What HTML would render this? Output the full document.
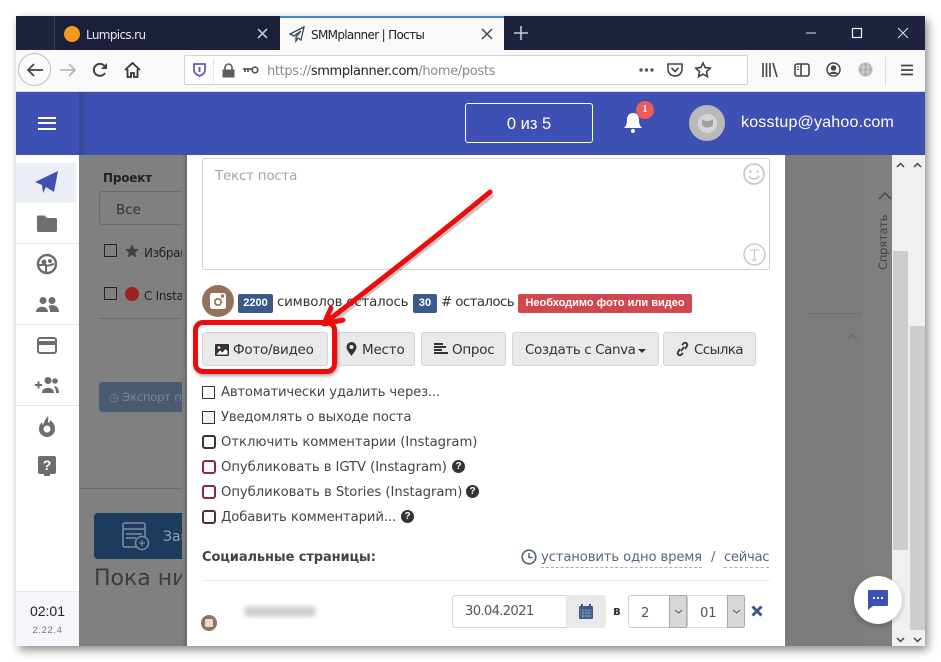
<!DOCTYPE html>
<html lang="ru"><head><meta charset="utf-8"><title>SMMplanner</title>
<style>
html,body{margin:0;padding:0;width:941px;height:662px;overflow:hidden;background:#fff}
body{position:relative;font-family:"DejaVu Sans","Liberation Sans",sans-serif;color:#333}
.a{position:absolute;white-space:nowrap}
.t{position:absolute;white-space:nowrap;line-height:1}
svg{position:absolute;overflow:visible}
.btn{position:absolute;top:332px;height:34px;background:#e9e9e9;border:1px solid #d4d4d4;border-radius:3px;box-sizing:border-box;font-size:14px;line-height:35px;color:#333;white-space:nowrap}
.cb{position:absolute;left:202px;width:13px;height:13px;border:1px solid #333;background:#fff;box-sizing:border-box}
.cbr{border-radius:3px;border-width:2px;width:14px;height:14px;left:202px}
.lab{position:absolute;left:221px;font-size:13.2px;line-height:18px;color:#444;white-space:nowrap}
.q{position:absolute;width:13px;height:13px;border-radius:50%;background:#333;color:#fff;font:bold 10px/13px "Liberation Sans",sans-serif;text-align:center}
.sep{position:absolute;left:16px;width:63px;height:1px;background:#e6e6e6}
</style></head><body>

<!-- window shadow -->
<div class="a" style="left:16px;top:16px;width:909px;height:630px;box-shadow:3px 4px 9px rgba(0,0,0,.45);background:#fff"></div>

<!-- tab bar -->
<div class="a" style="left:16px;top:16px;width:909px;height:34px;background:#1f2340"></div>
<div class="a" style="left:54px;top:17px;width:226px;height:33px;background:#1c1f3a;border-left:1px solid #3d405a"></div>
<div class="a" style="left:64px;top:26px;width:16px;height:16px;border-radius:50%;background:#f39a1c"></div>
<div class="t" style="left:86px;top:29px;font-size:12px;color:#e8e8ef;font-family:'DejaVu Sans',sans-serif;letter-spacing:-.65px">Lumpics.ru</div>
<svg style="left:257px;top:28px" width="11" height="11"><path d="M1 1L10 10M10 1L1 10" stroke="#bfc0c8" stroke-width="1.6"/></svg>
<div class="a" style="left:280px;top:16px;width:224px;height:34px;background:#f9f9fa;border-top:2px solid #3a86d8;box-sizing:border-box"></div>
<svg style="left:289px;top:26px" width="16" height="16" viewBox="0 0 16 16"><path d="M15 1L1 8l4 2 7-5-5 6v4l2-3 3 2z" fill="none" stroke="#33415c" stroke-width="1.3"/></svg>
<div class="t" style="left:311px;top:29px;font-size:12px;color:#222;letter-spacing:-.67px">SMMplanner | Посты</div>
<svg style="left:482px;top:29px" width="10" height="10"><path d="M0 0L10 10M10 0L0 10" stroke="#444" stroke-width="1.5"/></svg>
<svg style="left:514px;top:26px" width="14" height="14"><path d="M7 0V14M0 7H14" stroke="#c9cad2" stroke-width="1.6"/></svg>
<svg style="left:806px;top:26px" width="110" height="14"><path d="M0 7H10" stroke="#ddd" stroke-width="1"/><rect x="46.5" y="2.5" width="9" height="9" fill="none" stroke="#eee" stroke-width="1.2"/><path d="M92 2L102 12M102 2L92 12" stroke="#ddd" stroke-width="1"/></svg>

<!-- toolbar -->
<div class="a" style="left:16px;top:50px;width:909px;height:41px;background:#f9f9fa"></div>
<div class="a" style="left:18px;top:53px;width:33px;height:33px;border-radius:50%;border:1px solid #bdbdbd;box-sizing:border-box;background:#fbfbfb"></div>
<svg style="left:26px;top:62px" width="18" height="16"><path d="M17 8H2M8 2L2 8l6 6" fill="none" stroke="#444" stroke-width="1.7"/></svg>
<svg style="left:60px;top:62px" width="17" height="16"><path d="M0 8H15M9 2l6 6-6 6" fill="none" stroke="#b6b6b8" stroke-width="1.7"/></svg>
<svg style="left:92px;top:62px" width="17" height="16"><path d="M13 11A6 6 0 1 1 12.5 4" fill="none" stroke="#444" stroke-width="2"/><path d="M15 1v6H9z" fill="#444"/></svg>
<svg style="left:124px;top:62px" width="17" height="16"><path d="M1 8L8.500 1 16 8M3.500 7v8h3.500v-4h3v4h3.500V7" fill="none" stroke="#333" stroke-width="1.800"/></svg>
<div class="a" style="left:184px;top:55px;width:564px;height:30px;background:#fff;border:1px solid #d2d2d4;box-sizing:border-box;border-radius:2px"></div>
<svg style="left:192px;top:62px" width="15" height="16"><path d="M2 2h11v6c0 3-3 5-5.500 6C5 13 2 11 2 8z" fill="none" stroke="#5a5cc8" stroke-width="1.800"/><path d="M6.500 5h2v5h-2z" fill="#5a5cc8"/></svg>
<div class="a" style="left:213px;top:58px;width:1px;height:24px;background:#e4e4e4"></div>
<svg style="left:222px;top:63px" width="13" height="15"><path d="M3 7V4.500a3.500 3.500 0 0 1 7 0V7" fill="none" stroke="#5c5c5f" stroke-width="1.600"/><rect x="0.500" y="6.500" width="12" height="8" fill="#5c5c5f"/></svg>
<svg style="left:243px;top:66px" width="16" height="8"><circle cx="12" cy="4" r="2.800" fill="none" stroke="#555" stroke-width="1.700"/><path d="M0 3h9M2 3v3M5 3v3" stroke="#555" stroke-width="1.700" fill="none"/></svg>
<div class="t" style="left:267px;top:65px;font-size:13px;color:#8a8a8f;letter-spacing:-.35px">https://<span style="color:#222">smmplanner.com</span>/home/posts</div>
<svg style="left:638px;top:67px" width="17" height="6"><circle cx="3" cy="3" r="1.700" fill="#555"/><circle cx="8.500" cy="3" r="1.700" fill="#555"/><circle cx="14" cy="3" r="1.700" fill="#555"/></svg>
<svg style="left:667px;top:62px" width="16" height="15"><path d="M1 2h14v5c0 4-3 7-7 7s-7-3-7-7z" fill="none" stroke="#444" stroke-width="1.600"/><path d="M4.500 6L8 9.500 11.500 6" fill="none" stroke="#444" stroke-width="1.600"/></svg>
<svg style="left:695px;top:62px" width="16" height="16"><path d="M8 1l2.200 4.600 5 .6-3.700 3.400 1 5L8 12.200 3.500 14.600l1-5L.8 6.200l5-.6z" fill="none" stroke="#444" stroke-width="1.600"/></svg>
<svg style="left:762px;top:63px" width="16" height="14"><path d="M1 0v14M4.500 0v14M8 0v14M11 0l4 14" stroke="#444" stroke-width="1.600" fill="none"/></svg>
<svg style="left:794px;top:63px" width="16" height="14"><rect x="1" y="1" width="14" height="12" rx="2" fill="none" stroke="#444" stroke-width="1.600"/><path d="M7 1v12" stroke="#444" stroke-width="1.600"/><path d="M3 4h2M3 6.500h2" stroke="#444"/></svg>
<svg style="left:826px;top:62px" width="15" height="15"><circle cx="7.500" cy="7.500" r="6.500" fill="none" stroke="#444" stroke-width="1.500"/><circle cx="7.500" cy="6" r="2.700" fill="#444"/><path d="M3 12c1-3 8-3 9 0z" fill="#444"/></svg>
<svg style="left:858px;top:62px" width="15" height="15"><circle cx="7.500" cy="7.500" r="7" fill="#b0b0b0"/><path d="M0 5h15M0 10h15M5 0v15M10 0v15" stroke="#ddd" stroke-width=".8"/></svg>
<div class="a" style="left:885px;top:56px;width:1px;height:30px;background:#dcdcdc"></div>
<svg style="left:901px;top:64px" width="12" height="12"><path d="M0 1.500H12M0 6H12M0 10.500H12" stroke="#444" stroke-width="1.700"/></svg>

<!-- header -->
<div class="a" style="left:16px;top:91px;width:909px;height:64px;background:#3e50b4;border-top:1px solid #d8daea;box-sizing:border-box"></div>
<div class="a" style="left:79px;top:92px;width:10px;height:63px;background:linear-gradient(90deg,#38478f,#3e50b4)"></div>
<div class="a" style="left:38px;top:117px;width:18px;height:13px;border-top:2px solid #fff;border-bottom:2px solid #fff;box-sizing:border-box"></div>
<div class="a" style="left:38px;top:122px;width:18px;height:2px;background:#fff"></div>
<div class="a" style="left:465px;top:103px;width:128px;height:40px;border:1px solid #fff;border-radius:3px;box-sizing:border-box;color:#fff;text-align:center;font:16.500px/40px 'Liberation Sans',sans-serif">0 из 5</div>
<svg style="left:624px;top:112px" width="18" height="22"><path d="M9 1c-4 0-6 3-6 7 0 4-1 6-3 8h18c-2-2-3-4-3-8 0-4-2-7-6-7z" fill="#fff"/><circle cx="9" cy="19" r="2" fill="#fff"/></svg>
<div class="a" style="left:636px;top:101px;width:18px;height:18px;border-radius:50%;background:#ef5a5a;color:#fff;font:bold 10px/18px 'Liberation Serif',serif;text-align:center">1</div>
<div class="a" style="left:689px;top:105px;width:36px;height:36px;border-radius:50%;background:#b9b9b9"></div>
<div class="a" style="left:698px;top:114px;width:19px;height:19px;border-radius:50%;background:#d5d5d5"></div>
<svg style="left:701px;top:118px" width="13" height="11"><path d="M1 1l3 2h5l3-2v6a6 4 0 0 1-11 0z" fill="#a0a0a0"/></svg>
<div class="t" style="left:741px;top:115px;font:16px/1 'Liberation Sans',sans-serif;color:#fff;letter-spacing:.2px">kosstup@yahoo.com</div>

<!-- sidebar -->
<div class="a" style="left:16px;top:155px;width:63px;height:491px;background:#fff"></div>
<div class="a" style="left:16px;top:163px;width:60px;height:40px;background:#eceef8"></div>
<svg style="left:35px;top:170px" width="24" height="24"><path d="M0 12L23 1l-4 21-8-5-3 6-1-8z" fill="#3e50b4"/></svg>
<svg style="left:37px;top:215px" width="20" height="17"><path d="M0 2a1.500 1.500 0 0 1 1.500-1.500h6L10 3h8.500A1.500 1.500 0 0 1 20 4.500v11a1.500 1.500 0 0 1-1.500 1.500h-17A1.500 1.500 0 0 1 0 15.500z" fill="#6d6d6d"/></svg>
<div class="sep" style="top:243px"></div>
<svg style="left:37px;top:254px" width="20" height="20"><circle cx="10" cy="10" r="9" fill="none" stroke="#6d6d6d" stroke-width="2.500"/><circle cx="7" cy="8" r="2.500" fill="#6d6d6d"/><circle cx="13" cy="7" r="2" fill="#6d6d6d"/><path d="M2 11h7v7M10 12l7-2" stroke="#6d6d6d" stroke-width="2" fill="none"/></svg>
<svg style="left:36px;top:297px" width="23" height="15"><circle cx="7" cy="3.500" r="3.500" fill="#6d6d6d"/><circle cx="16" cy="3.500" r="3.500" fill="#6d6d6d"/><path d="M0 15c0-7 12-7 12 0zM12.500 9c4-2 10-1 10.500 6h-9c0-3-.5-4-1.500-6z" fill="#6d6d6d"/></svg>
<div class="sep" style="top:324px"></div>
<svg style="left:37px;top:337px" width="20" height="17"><rect x="1" y="1" width="18" height="15" rx="2" fill="none" stroke="#6d6d6d" stroke-width="2"/><rect x="1" y="4" width="18" height="4" fill="#6d6d6d"/></svg>
<svg style="left:35px;top:377px" width="24" height="16"><path d="M0 8h7M3.500 4.500v7" stroke="#6d6d6d" stroke-width="2"/><circle cx="13" cy="3.500" r="3.500" fill="#6d6d6d"/><circle cx="20" cy="4" r="2.800" fill="#6d6d6d"/><path d="M7 16c0-7 12-7 12 0zM19 9c3 0 5 3 5 7h-3c0-3-1-5-2-7z" fill="#6d6d6d"/></svg>
<div class="sep" style="top:405px"></div>
<svg style="left:39px;top:416px" width="16" height="21"><path d="M9 0c1 4-1 5 1 7 1-1 1-2 1-3 3 2 5 5 5 9a8 8 0 0 1-16 0c0-3 1-5 3-7 0 1 0 2 1 3 1-4 3-6 5-9z" fill="#6d6d6d"/><circle cx="8" cy="13" r="3.500" fill="#fff"/></svg>
<div class="a" style="left:38px;top:456px;width:18px;height:18px;background:#6d6d6d;border-radius:2px;color:#fff;font:bold 14px/18px 'Liberation Sans',sans-serif;text-align:center">?</div>
<div class="a" style="left:44px;top:473px;width:6px;height:3px;background:#6d6d6d"></div>
<div class="a" style="left:16px;top:591px;width:63px;height:55px;background:#f5f6fb;border-top:1px solid #e8e8e8;box-sizing:border-box"></div>
<div class="t" style="left:16px;width:63px;text-align:center;top:604px;font:14px/1 'Liberation Sans',sans-serif;color:#222">02:01</div>
<div class="t" style="left:16px;width:63px;text-align:center;top:626px;font:9.500px/1 'Liberation Sans',sans-serif;color:#777;letter-spacing:.6px">2.22.4</div>

<!-- dark page left -->
<div class="a" style="left:79px;top:155px;width:108px;height:491px;background:#808080;overflow:hidden">
  <div class="t" style="left:24px;top:17px;font-size:12px;font-weight:bold;color:#222;letter-spacing:-.2px">Проект</div>
  <div class="a" style="left:20px;top:36px;width:120px;height:34px;border:1px solid #6a6a6a;border-radius:3px;box-sizing:border-box"></div>
  <div class="t" style="left:37px;top:49px;font-size:13.500px;color:#333">Все</div>
  <div class="a" style="left:25px;top:89px;width:13px;height:13px;border:1px solid #222;box-sizing:border-box"></div>
  <svg style="left:46px;top:89px" width="14" height="14"><path d="M7 0l2 4.700 5 .5-3.800 3.300 1.200 5L7 11 2.600 13.500l1.200-5L0 5.200l5-.5z" fill="#3c4444"/></svg>
  <div class="t" style="left:65px;top:92px;font-size:12px;color:#222;letter-spacing:-.3px">Избранные</div>
  <div class="a" style="left:25px;top:132px;width:13px;height:13px;border:1px solid #222;box-sizing:border-box"></div>
  <div class="a" style="left:46px;top:132px;width:14px;height:14px;border-radius:50%;background:#a02020"></div>
  <div class="t" style="left:65px;top:135px;font-size:12px;color:#222;letter-spacing:-.3px">С Instagram</div>
  <div class="a" style="left:20px;top:163px;width:100px;height:1px;background:#6e6e6e"></div>
  <div class="a" style="left:20px;top:227px;width:120px;height:30px;background:#4a5a70;border-radius:3px"></div>
  <div class="t" style="left:30px;top:237px;font-size:11.500px;color:#7a8696;letter-spacing:-.2px">◷ Экспорт постов</div>
  <div class="a" style="left:0;top:333px;width:108px;height:1px;background:#6a6a6a"></div>
  <div class="a" style="left:15px;top:358px;width:120px;height:46px;background:#1e3a5c;border-radius:4px"></div>
  <svg style="left:43px;top:367px" width="28" height="28"><rect x="1" y="1" width="22" height="24" rx="2" fill="none" stroke="#7e8ea3" stroke-width="1.500"/><path d="M1 7h22M4 12h16M4 16h10" stroke="#7e8ea3" stroke-width="1.500"/><circle cx="20" cy="21" r="6.500" fill="#1e3a5c" stroke="#7e8ea3" stroke-width="1.500"/><path d="M20 18v6M17 21h6" stroke="#7e8ea3" stroke-width="1.300"/></svg>
  <div class="t" style="left:84px;top:375px;font-size:14px;color:#92a0b2">Загрузить</div>
  <div class="t" style="left:15px;top:413px;font-size:22px;color:#3c3c3c">Пока ничего</div>
</div>
<div class="a" style="left:182px;top:155px;width:5px;height:491px;background:linear-gradient(90deg,#808080,#6a6a6a)"></div>

<!-- modal -->
<div class="a" style="left:187px;top:155px;width:598px;height:491px;background:#fff"></div>
<div class="a" style="left:202px;top:158px;width:568px;height:112px;border:1px solid #cfcfcf;border-radius:3px;box-sizing:border-box;background:#fff"></div>
<div class="t" style="left:215px;top:170px;font-size:13.500px;color:#a5a5a5;letter-spacing:-.25px">Текст поста</div>
<svg style="left:743px;top:163px" width="22" height="22"><circle cx="11" cy="11" r="10" fill="none" stroke="#c9c9c9" stroke-width="1.800"/><circle cx="7.500" cy="8.500" r="1.300" fill="#c9c9c9"/><circle cx="14.500" cy="8.500" r="1.300" fill="#c9c9c9"/><path d="M6 13c2 4 8 4 10 0" fill="none" stroke="#c9c9c9" stroke-width="1.500"/></svg>
<svg style="left:743px;top:243px" width="23" height="23"><circle cx="11.500" cy="11.500" r="10.500" fill="none" stroke="#c9c9c9" stroke-width="1.500"/><path d="M6.500 7h10M11.500 7v10M9 17h5" fill="none" stroke="#c9c9c9" stroke-width="1.200"/></svg>

<!-- counters -->
<div class="a" style="left:202px;top:285px;width:32px;height:32px;border-radius:50%;background:#95705c"></div>
<svg style="left:209px;top:292px" width="18" height="18"><rect x="1" y="1" width="16" height="16" rx="2.500" fill="#fff"/><circle cx="9" cy="10" r="4" fill="#95705c"/><circle cx="9" cy="10" r="2.300" fill="#fff"/><rect x="12" y="2.500" width="3" height="3" fill="#95705c"/></svg>
<div class="a" style="left:238px;top:294px;width:35px;height:19px;background:#3b5a8a;border-radius:2px;color:#fff;font:bold 11px/19px 'Liberation Sans',sans-serif;text-align:center">2200</div>
<div class="t" style="left:277px;top:296px;font-size:13.400px;color:#333;letter-spacing:-.2px">символов осталось</div>
<div class="a" style="left:413px;top:294px;width:24px;height:19px;background:#3b5a8a;border-radius:2px;color:#fff;font:bold 11px/19px 'Liberation Sans',sans-serif;text-align:center">30</div>
<div class="t" style="left:441px;top:296px;font-size:13.400px;color:#333;letter-spacing:-.6px"># осталось</div>
<div class="a" style="left:518px;top:294px;width:174px;height:19px;background:#d0484f;border-radius:2px;color:#fff;font:bold 11px/19px 'Liberation Sans',sans-serif;text-align:center">Необходимо фото или видео</div>

<!-- buttons -->
<div class="btn" style="left:202px;width:126px;padding-left:30px;letter-spacing:-.26px;font-size:13.500px">Фото/видео</div>
<svg style="left:215px;top:344px" width="14" height="12"><rect width="14" height="12" rx="1" fill="#333"/><path d="M1.500 10.500l3.500-4 2.500 2 3-3.500 2 2v3.500z" fill="#fff"/><circle cx="4" cy="3.500" r="1.300" fill="#fff"/></svg>
<div class="btn" style="left:337px;width:78px;padding-left:24px;letter-spacing:-.2px;font-size:13.500px">Место</div>
<svg style="left:346px;top:342px" width="11" height="14"><path d="M5.500 0a5 5 0 0 1 5 5c0 3-3 6-5 9-2-3-5-6-5-9a5 5 0 0 1 5-5z" fill="#333"/><circle cx="5.500" cy="5" r="2" fill="#e9e9e9"/></svg>
<div class="btn" style="left:421px;width:85px;padding-left:30px;letter-spacing:-.26px;font-size:13.500px">Опрос</div>
<svg style="left:434px;top:343px" width="14" height="13"><path d="M0 1h9M0 4h12M0 7h8M0 10h14" stroke="#333" stroke-width="2"/></svg>
<div class="btn" style="left:512px;width:147px;padding-left:12px;letter-spacing:-.42px;font-size:13.500px">Создать с Canva</div>
<div class="a" style="left:638px;top:349px;width:0;height:0;border-left:4px solid transparent;border-right:4px solid transparent;border-top:4px solid #333"></div>
<div class="btn" style="left:663px;width:93px;padding-left:30px;letter-spacing:-.6px;font-size:13.500px">Ссылка</div>
<svg style="left:676px;top:342px" width="13" height="14"><path d="M6 3l2-2c2-1 4 1 3 3L9 7M7 11l-2 2c-2 1-4-1-3-3l2-3M5 9l3-4" fill="none" stroke="#333" stroke-width="1.800"/></svg>

<!-- checkboxes -->
<div class="cb" style="top:386px"></div><div class="lab" style="top:384px;letter-spacing:-.18px">Автоматически удалить через...</div>
<div class="cb" style="top:411px;background:#f3f3f3"></div><div class="lab" style="top:409px;letter-spacing:-.17px">Уведомлять о выходе поста</div>
<div class="cb cbr" style="top:435px;border-color:#3c3040"></div><div class="lab" style="top:434px;letter-spacing:-.02px">Отключить комментарии (Instagram)</div>
<div class="cb cbr" style="top:460px;border-color:#8a2a3a"></div><div class="lab" style="top:459px;letter-spacing:-.06px">Опубликовать в IGTV (Instagram)</div><div class="q" style="left:452px;top:460px">?</div>
<div class="cb cbr" style="top:485px;border-color:#8a2a3a"></div><div class="lab" style="top:484px;letter-spacing:-.04px">Опубликовать в Stories (Instagram)</div><div class="q" style="left:466px;top:485px">?</div>
<div class="cb cbr" style="top:510px;border-color:#4a3040"></div><div class="lab" style="top:509px;letter-spacing:-.08px">Добавить комментарий...</div><div class="q" style="left:401px;top:510px">?</div>

<div class="t" style="left:202px;top:551px;font-size:13px;font-weight:bold;color:#444;letter-spacing:-.1px">Социальные страницы:</div>
<svg style="left:521px;top:549px" width="16" height="16"><circle cx="8" cy="8" r="6.800" fill="none" stroke="#56657f" stroke-width="1.700"/><path d="M8 4v4.500h3.500" fill="none" stroke="#56657f" stroke-width="1.500"/></svg>
<div class="t" style="left:541px;top:551px;font-size:13.200px;color:#56657f;letter-spacing:-.13px;border-bottom:1px dashed #a8b0be;padding-bottom:3px">установить одно время</div>
<div class="t" style="left:711px;top:551px;font-size:13.200px;color:#56657f">/</div>
<div class="t" style="left:724px;top:551px;font-size:13.200px;color:#56657f;letter-spacing:-.32px;border-bottom:1px dashed #a8b0be;padding-bottom:3px">сейчас</div>
<div class="a" style="left:202px;top:580px;width:568px;height:1px;background:#eaeaea"></div>

<!-- row -->
<div class="a" style="left:201px;top:615px;width:16px;height:16px;border-radius:50%;background:#95705c"></div>
<div class="a" style="left:205px;top:619px;width:8px;height:8px;background:#e3d8d2;border-radius:1px"></div>
<div class="a" style="left:244px;top:606px;width:72px;height:11px;background:#cfcfcf;border-radius:5px;filter:blur(2.500px)"></div>
<div class="a" style="left:452px;top:595px;width:115px;height:33px;border:1px solid #d2d2d2;border-radius:3px 0 0 3px;box-sizing:border-box;background:#fff"></div>
<div class="t" style="left:465px;top:605px;font-size:13.200px;color:#555;letter-spacing:-.7px">30.04.2021</div>
<div class="a" style="left:566px;top:595px;width:40px;height:33px;background:#e9e9e9;border-radius:0 3px 3px 0"></div>
<svg style="left:579px;top:604px" width="14" height="15"><rect y="2" width="14" height="13" rx="1" fill="#3b5a8a"/><path d="M3 0v3M11 0v3" stroke="#3b5a8a" stroke-width="2"/><path d="M1 6h12M1 9h12M1 12h12M4 6v8M7 6v8M10 6v8" stroke="#9cb0cc" stroke-width=".6"/></svg>
<div class="t" style="left:613px;top:605px;font-size:12px;font-weight:bold;color:#333">в</div>
<div class="a" style="left:628px;top:595px;width:60px;height:33px;border:1px solid #ccc;border-radius:3px;box-sizing:border-box;background:#fff"></div>
<div class="a" style="left:669px;top:595px;width:18px;height:33px;background:#d8d8d8;border:1px solid #aaa;box-sizing:border-box"></div>
<svg style="left:674px;top:609px" width="9" height="5"><path d="M1 1l3.500 3L8 1" fill="none" stroke="#555"/></svg>
<div class="a" style="left:688px;top:595px;width:57px;height:33px;background:#fff;border-top:1px solid #ddd;border-bottom:1px solid #ddd;box-sizing:border-box"></div>
<div class="a" style="left:727px;top:595px;width:18px;height:33px;background:#d8d8d8;border:1px solid #aaa;border-radius:0 3px 3px 0;box-sizing:border-box"></div>
<svg style="left:732px;top:609px" width="9" height="5"><path d="M1 1l3.500 3L8 1" fill="none" stroke="#555"/></svg>
<div class="t" style="left:641px;top:607px;font-size:13.200px;color:#555">2</div>
<div class="t" style="left:700px;top:607px;font-size:13.200px;color:#555;letter-spacing:-.3px">01</div>
<svg style="left:751px;top:605px" width="12" height="12"><path d="M1.500 1.500L10.500 10.500M10.500 1.500L1.500 10.500" stroke="#3b5a8a" stroke-width="3"/></svg>

<!-- dark page right -->
<div class="a" style="left:785px;top:155px;width:107px;height:491px;background:#7f7f7f;overflow:hidden">
  <div class="a" style="left:0;top:0;width:78px;height:491px;background:#7b7b7b"></div>
  <div class="a" style="left:22px;top:158px;width:54px;height:1px;background:#6e6e6e"></div>
  <svg style="left:94px;top:37px" width="12" height="8"><path d="M0 7L6 1l6 6" fill="none" stroke="#4a4a4a" stroke-width="1.500"/></svg>
  <div class="t" style="left:93px;top:115px;font-size:11.500px;color:#444;transform:rotate(-90deg);transform-origin:0 0;letter-spacing:-.2px">Спрятать</div>
  <svg style="left:62px;top:179px" width="9" height="6"><path d="M0 5l4.500-4L9 5" fill="none" stroke="#6a6a6a" stroke-width="1.300"/></svg>
</div>

<!-- scrollbars -->
<div class="a" style="left:892px;top:155px;width:17px;height:491px;background:#f0f0f0"></div>
<div class="a" style="left:893px;top:251px;width:15px;height:299px;background:#cdcdcd"></div>
<div class="a" style="left:909px;top:155px;width:16px;height:491px;background:#f0f0f0"></div>
<div class="a" style="left:910px;top:326px;width:15px;height:304px;background:#cdcdcd"></div>
<svg style="left:897px;top:162px" width="30" height="6"><path d="M0 5l3.500-3.500L7 5M17 5l3.500-3.500L24 5" fill="none" stroke="#444" stroke-width="1.500"/></svg>
<svg style="left:897px;top:637px" width="30" height="6"><path d="M0 1l3.500 3.500L7 1M17 1l3.500 3.500L24 1" fill="none" stroke="#444" stroke-width="1.500"/></svg>

<!-- chat -->
<div class="a" style="left:854px;top:576px;width:48px;height:48px;border-radius:50%;background:#fff;box-shadow:0 2px 6px rgba(0,0,0,.25)"></div>
<svg style="left:868px;top:590px" width="20" height="20"><path d="M1 0h18a1 1 0 0 1 1 1v14a1 1 0 0 1-1 1H5l-5 4V1a1 1 0 0 1 1-1z" fill="#3e50b4"/><circle cx="6" cy="8" r="1.100" fill="#fff"/><circle cx="10" cy="8" r="1.100" fill="#fff"/><circle cx="14" cy="8" r="1.100" fill="#fff"/></svg>

<!-- red annotation -->
<div class="a" style="left:193px;top:320px;width:144px;height:54px;border:5px solid #ee0b0b;border-radius:10px;box-sizing:border-box;box-shadow:1px 2px 3px rgba(0,0,0,.35)"></div>
<svg style="left:0;top:0" width="941" height="662">
  <path d="M490 194L328 322" stroke="rgba(0,0,0,.22)" stroke-width="5" stroke-linecap="round" transform="translate(1,2)"/>
  <path d="M490 192Q420 250 326 322" stroke="#ee0b0b" stroke-width="5" stroke-linecap="round" fill="none"/>
  <path d="M331 308L324 324L343 320" stroke="#ee0b0b" stroke-width="5" stroke-linecap="round" stroke-linejoin="round" fill="none"/>
</svg>
</body></html>
